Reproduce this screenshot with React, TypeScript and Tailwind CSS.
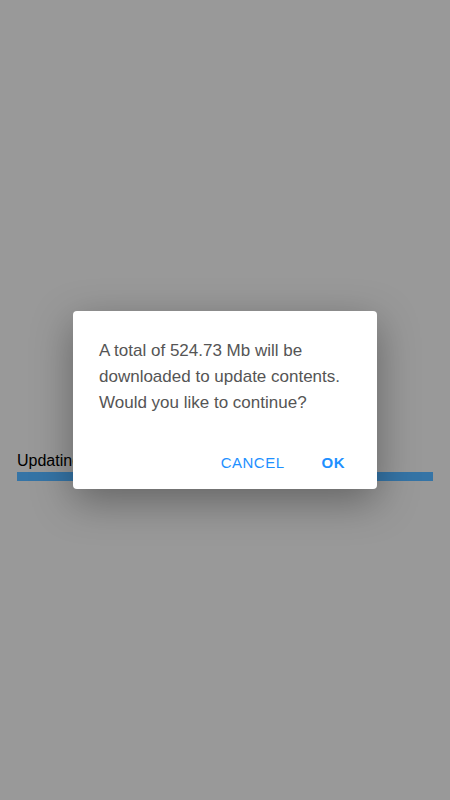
export default function App() {
  return (
    <div
      className="relative h-[800px] w-[450px] overflow-hidden bg-[#999999]"
      style={{ fontFamily: '"Liberation Sans", Arial, sans-serif' }}
    >
      {/* Underlying update screen */}
      <div className="px-[17px] pt-[451px]">
        <div className="text-[16px] leading-[20px] text-black">Updating...</div>
        <div className="mt-[1px] h-[9px] w-full bg-[#3574a6]" />
      </div>

      {/* Confirm dialog */}
      <div className="absolute inset-0 flex items-center justify-center">
        <div className="w-[304px] rounded-[4px] bg-white shadow-[0_12px_40px_rgba(0,0,0,0.35)]">
          <p className="px-[26px] pt-[27px] text-[17px] leading-[26px] text-[#555555]">
            A total of 524.73 Mb will be downloaded to update contents. Would you like to continue?
          </p>
          <div className="flex justify-end gap-[37px] pr-[32px] pt-[38px] pb-[17px]">
            <button className="text-[15px] leading-[18px] tracking-[0.5px] text-[#1e90ff]">CANCEL</button>
            <button className="text-[15px] font-bold leading-[18px] tracking-[0.5px] text-[#1e90ff]">OK</button>
          </div>
        </div>
      </div>
    </div>
  );
}
